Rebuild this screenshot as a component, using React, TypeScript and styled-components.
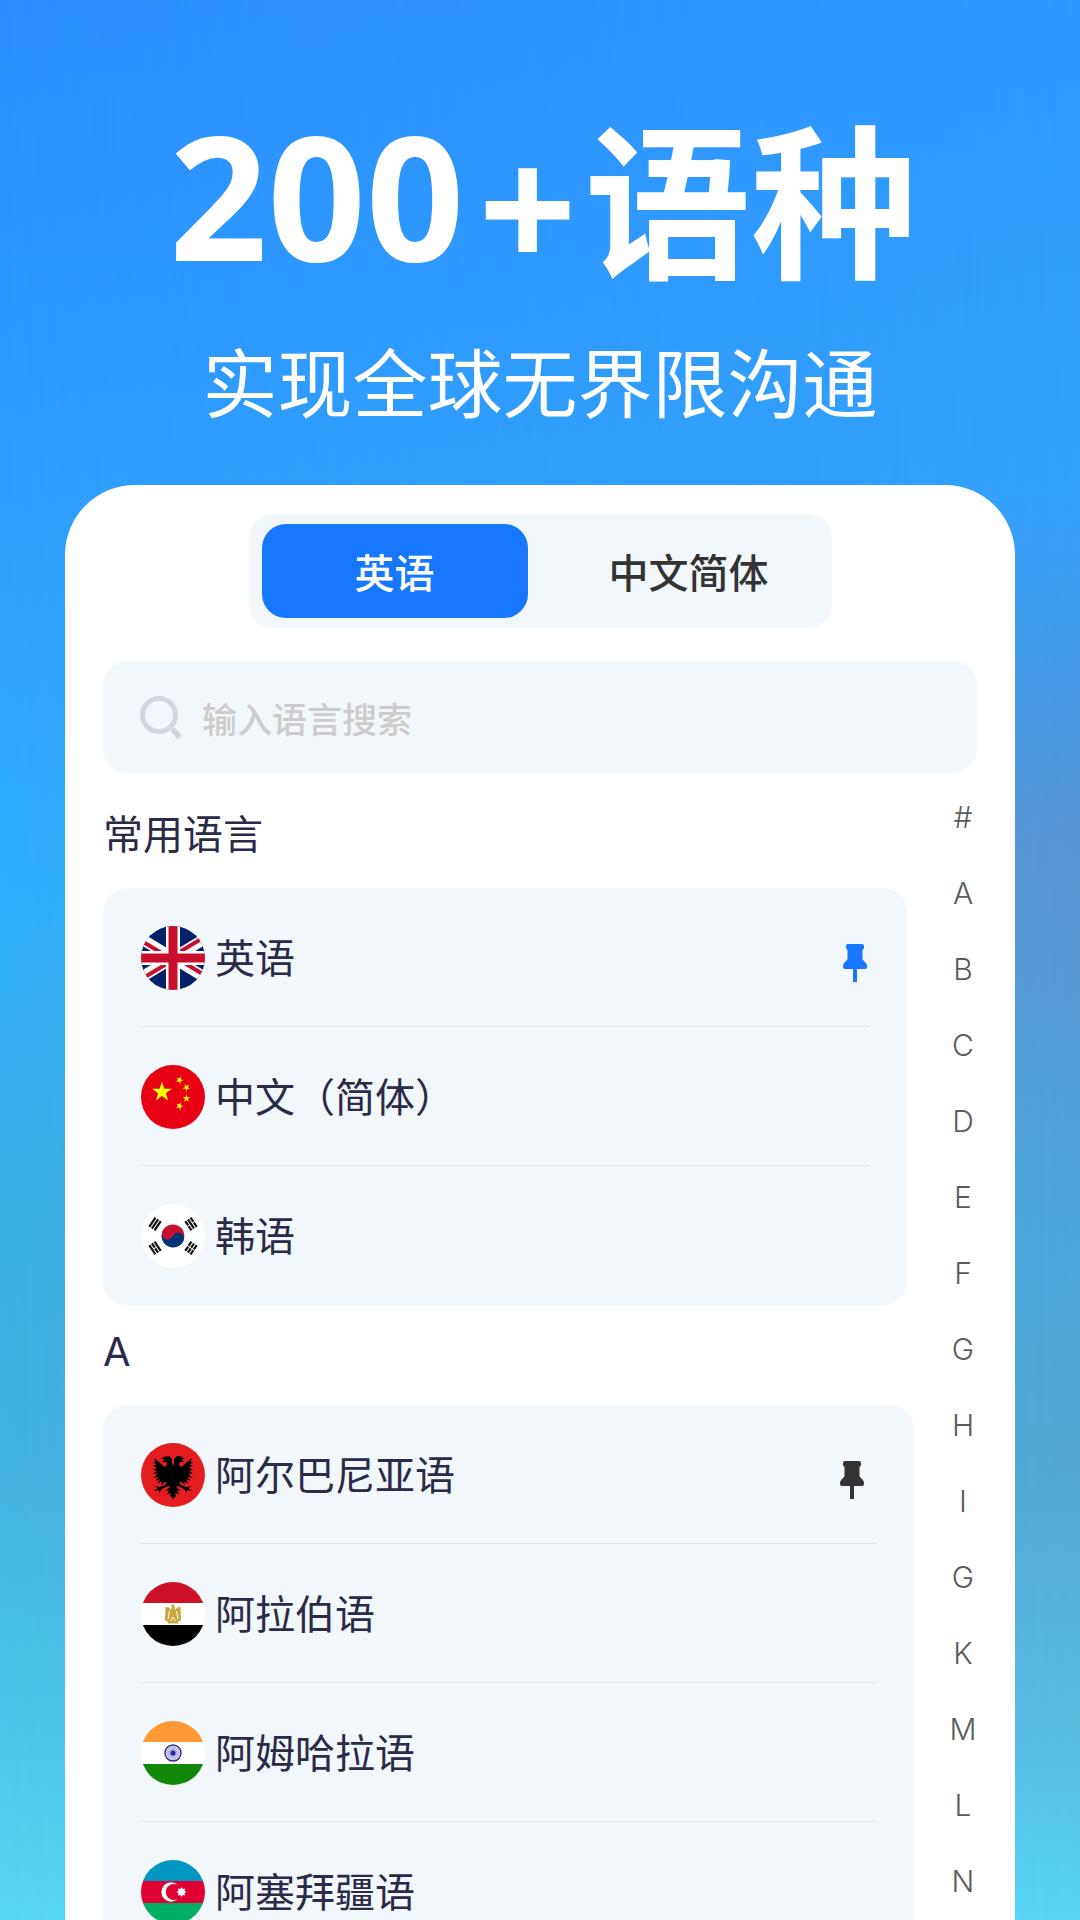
import React, { useState } from 'react';
import styled, { createGlobalStyle } from 'styled-components';

const GlobalStyle = createGlobalStyle`
  * {
    box-sizing: border-box;
  }

  body {
    margin: 0;
    font-family: 'Noto Sans CJK SC', 'Noto Sans', sans-serif;
  }

  button,
  input {
    font-family: inherit;
    border: none;
    padding: 0;
    background: none;
  }

  ul {
    list-style: none;
    margin: 0;
    padding: 0;
  }
`;

const Page = styled.div`
  position: relative;
  display: flex;
  flex-direction: column;
  height: 100vh;
  overflow: hidden;
  background: linear-gradient(
    180deg,
    #2b8dff 0%,
    #2e9fff 27%,
    #2eaefa 47%,
    #3db0e4 64%,
    #46b4e1 78%,
    #4cc6ec 90%,
    #55d7f3 100%
  );

  &::before {
    content: '';
    position: absolute;
    inset: 0;
    background: linear-gradient(
      180deg,
      #3098ff 0%,
      #33a0fb 25%,
      #4599e6 35%,
      #5894d3 44%,
      #5698d4 51%,
      #4aa4da 64%,
      #53a8d4 76%,
      #5abbdf 90%,
      #57d4f0 100%
    );
    mask-image: linear-gradient(90deg, transparent 0%, #000 100%);
  }
`;

const Hero = styled.header`
  position: relative;
  display: flex;
  flex-direction: column;
  align-items: center;
  flex: none;
  height: 485px;
  padding-top: 74px;
  color: #fff;
`;

const Title = styled.h1`
  display: flex;
  align-items: flex-start;
  margin: 0;
  padding-left: 6px;
  font-size: 166px;
  line-height: 240px;
  font-weight: 700;
`;

const Count = styled.span`
  font-family: 'Noto Sans', sans-serif;
  font-size: 172px;
`;

const Plus = styled(Count)`
  margin: 0 8px 0 14px;
  padding-top: 10px;
`;

const Subtitle = styled.p`
  margin: 0;
  font-size: 75px;
  line-height: 112px;
  font-weight: 400;
`;

const Panel = styled.main`
  position: relative;
  flex: 1;
  min-height: 0;
  display: flex;
  flex-direction: column;
  margin: 0 65px;
  padding: 29px 38px 0;
  overflow: hidden;
  background: #fff;
  border-radius: 70px 70px 0 0;
`;

const Tabs = styled.div`
  display: flex;
  flex: none;
  align-self: center;
  gap: 28px;
  padding: 10px 10px 10px 13px;
  border-radius: 24px;
  background: #f1f7fa;
`;

const Tab = styled.button<{ $active: boolean }>`
  width: 266px;
  height: 94px;
  border-radius: 24px;
  font-size: 40px;
  font-weight: 500;
  color: ${({ $active }) => ($active ? '#fff' : '#333')};
  background: ${({ $active }) => ($active ? '#1877ff' : 'transparent')};
`;

const SearchBox = styled.label`
  display: flex;
  align-items: center;
  flex: none;
  gap: 18px;
  height: 112px;
  margin-top: 33px;
  padding: 0 35px;
  border-radius: 24px;
  background: #f1f7fa;
`;

const SearchInput = styled.input`
  flex: 1;
  min-width: 0;
  font-size: 35px;
  font-weight: 500;
  color: #2b2a48;
  outline: none;

  &::placeholder {
    color: #ccc;
    opacity: 1;
  }
`;

const Body = styled.div`
  display: grid;
  grid-template-columns: 1fr 63px;
  padding-top: 6px;
`;

const Sections = styled.div`
  padding-top: 9px;
`;

const SectionTitle = styled.h2`
  margin: 0;
  padding: 17px 0 23px;
  font-family: Inter, 'Noto Sans CJK SC', sans-serif;
  font-size: 40px;
  line-height: 60px;
  font-weight: 400;
  color: #2b2a48;
`;

const LanguageList = styled.ul<{ $inset: number }>`
  margin-right: ${({ $inset }) => $inset}px;
  padding: 0 37px;
  border-radius: 24px;
  background: #f1f7fa;
`;

const LanguageRow = styled.li`
  display: flex;
  align-items: center;
  height: 139px;
  gap: 10px;
  padding-left: 1px;

  & + & {
    box-shadow: 0 -1px 0 #dfe4e8;
  }
`;

const LanguageName = styled.span`
  padding-bottom: 4px;
  font-size: 40px;
  color: #2b2a48;
`;

const PinButton = styled.button<{ $inset: number; $color: string }>`
  margin: 12px ${({ $inset }) => $inset}px 0 auto;
  color: ${({ $color }) => $color};

  svg {
    display: block;
  }
`;

const IndexBar = styled.nav`
  display: flex;
  flex-direction: column;
  padding-left: 35px;
`;

const IndexLink = styled.a`
  font-family: Inter, sans-serif;
  font-size: 30px;
  line-height: 76px;
  font-weight: 300;
  text-align: center;
  text-decoration: none;
  color: #5c5c5c;
`;

const star = (cx: number, cy: number, r: number, points = 5, inner = 0.382, turn = 0) =>
  Array.from({ length: points * 2 }, (_, i) => {
    const radius = i % 2 ? r * inner : r;
    const angle = (Math.PI * i) / points - Math.PI / 2 + turn;
    return `${(cx + radius * Math.cos(angle)).toFixed(2)},${(cy + radius * Math.sin(angle)).toFixed(2)}`;
  }).join(' ');

const Stripes: React.FC<{ colors: string[] }> = ({ colors }) => (
  <>
    <rect x="-32" y="-32" width="64" height="22" fill={colors[0]} />
    <rect x="-32" y="-11" width="64" height="22" fill={colors[1]} />
    <rect x="-32" y="11" width="64" height="22" fill={colors[2]} />
  </>
);

const eagleHalf =
  'M0.3-8L-1-12-1-16-4-19-8-18.500-12-16-8-15.500-11-13-7-13-6-10-8-8-11-10-14-13-19-17-17.500-13-20-13-17-10.500-20-9-16-7.500-20-5-16-4.500-20-1-15.500-1.500-19 3-14.500 1.500-17.500 6-13 4-15.500 8.500-11 6.500-12 10-8 7-6 7-8 10-13 12-19 11-15 13-19 16-14 15-14 18-11 14-7 12-5 11-3 12-8 16-4 15-6 19-2 18-3 21 0.300 24Z';

const flagArt: Record<string, React.ReactNode> = {
  gb: (
    <>
      <rect x="-32" y="-32" width="64" height="64" fill="#012169" />
      <path d="M-53-32L53 32M-53 32L53-32" stroke="#fff" strokeWidth="11" />
      <path d="M-53-30L0 2M53 30L0-2M0-2L53-34M0 2L-53 34" stroke="#c8102e" strokeWidth="4" />
      <path d="M0-32V32M-32 0H32" stroke="#fff" strokeWidth="14" />
      <path d="M0-32V32M-32 0H32" stroke="#c8102e" strokeWidth="9" />
    </>
  ),
  cn: (
    <>
      <rect x="-32" y="-32" width="64" height="64" fill="#e60012" />
      <g fill="#ffff00">
        <polygon points={star(-11, -5, 10.5)} />
        <polygon points={star(6.5, -17, 4, 5, 0.382, 0.4)} />
        <polygon points={star(13.5, -9.5, 4, 5, 0.382, 0.7)} />
        <polygon points={star(13.5, 1.5, 4)} />
        <polygon points={star(6.5, 9, 4, 5, 0.382, 0.4)} />
      </g>
    </>
  ),
  kr: (
    <>
      <rect x="-32" y="-32" width="64" height="64" fill="#fff" />
      <g transform="rotate(24)">
        <path d="M-11.500 0A11.500 11.500 0 0 1 11.500 0Z" fill="#c8102e" />
        <path d="M-11.500 0A11.500 11.500 0 0 0 11.500 0Z" fill="#003478" />
        <circle cx="-5.750" r="5.750" fill="#c8102e" />
        <circle cx="5.750" r="5.750" fill="#003478" />
      </g>
      <g stroke="#111" strokeWidth="2.200">
        <path d="M-5.500-3.200H5.500M-5.500 0H5.500M-5.500 3.200H5.500" transform="translate(-18 -12) rotate(-56)" />
        <path d="M-5.500-3.200H5.500M-5.500 0H-.4M.4 0H5.500M-5.500 3.200H5.500" transform="translate(-18 12) rotate(56)" />
        <path d="M-5.500-3.200H-.4M.4-3.200H5.500M-5.500 0H5.500M-5.500 3.200H-.4M.4 3.200H5.500" transform="translate(18 -12) rotate(56)" />
        <path d="M-5.500-3.200H-.4M.4-3.200H5.500M-5.500 0H-.4M.4 0H5.500M-5.500 3.200H-.4M.4 3.200H5.500" transform="translate(18 12) rotate(-56)" />
      </g>
    </>
  ),
  al: (
    <>
      <rect x="-32" y="-32" width="64" height="64" fill="#e41e20" />
      <path d={eagleHalf} />
      <path d={eagleHalf} transform="scale(-1 1)" />
    </>
  ),
  eg: (
    <>
      <Stripes colors={['#ce1126', '#fff', '#000']} />
      <g fill="#c9a73c">
        <path d="M-2-9.500L1-9.500 1.500-7 2.500-4 4-6.500 7.500-7 8 6 5 8H-5L-8 6-7.500-7-4-6.500-2.500-4-1-7Z" />
        <path d="M-5 7H5V9.500H-5Z" />
      </g>
      <path d="M-3.500-3L-5 5M3.500-3L5 5M-2.500 7L0 3L2.500 7" stroke="#fff" strokeWidth="1" fill="none" />
    </>
  ),
  in: (
    <>
      <Stripes colors={['#ff9933', '#fff', '#138808']} />
      <circle r="8" fill="#e4e4f6" stroke="#2a2a9c" strokeWidth="1.400" />
      <path
        d="M-7 0H7M0-7V7M-5-5L5 5M-5 5L5-5M-6.500-2.700L6.500 2.700M-6.500 2.700L6.500-2.700M-2.700-6.500L2.700 6.500M-2.700 6.500L2.700-6.500"
        stroke="#6a6abc"
        strokeWidth="0.600"
      />
      <circle r="2.500" fill="#2a2a9c" />
    </>
  ),
  az: (
    <>
      <Stripes colors={['#0098c3', '#e00034', '#00ae65']} />
      <circle cx="-2" r="9.700" fill="#fff" />
      <circle cx="0.800" r="8" fill="#e00034" />
      <polygon points={star(8.5, 0, 5, 8, 0.65)} fill="#fff" />
    </>
  ),
};

const Flag: React.FC<{ code: string }> = ({ code }) => (
  <svg width="64" height="64" viewBox="-32 -32 64 64" aria-hidden="true">
    <defs>
      <clipPath id={`flag-${code}`}>
        <circle r="32" />
      </clipPath>
    </defs>
    <g clipPath={`url(#flag-${code})`}>{flagArt[code]}</g>
  </svg>
);

const PinIcon = () => (
  <svg width="24" height="39" viewBox="0 0 24 39" fill="currentColor" aria-hidden="true">
    <path d="M5 0H19Q21 0 21 2V3.500Q21 5 19.500 6V15Q20 16.500 22 18Q24 20 24 22V23Q24 25 22 25H14V38H10V25H2Q0 25 0 23V22Q0 20 2 18Q4 16.500 4.500 15V6Q3 5 3 3.500V2Q3 0 5 0Z" />
  </svg>
);

const SearchIcon = () => (
  <svg width="46" height="46" viewBox="0 0 46 46" fill="none" stroke="#d3d5e2" aria-hidden="true">
    <circle cx="21" cy="21" r="16.500" strokeWidth="5" />
    <path d="M36 37L40 41.500" strokeWidth="6" strokeLinecap="round" />
  </svg>
);

const tabs = ['英语', '中文简体'];

const sections = [
  {
    title: '常用语言',
    inset: 7,
    pinInset: 3,
    pinColor: '#1877ff',
    languages: [
      { code: 'gb', name: '英语', pinned: true },
      { code: 'cn', name: '中文（简体）' },
      { code: 'kr', name: '韩语' },
    ],
  },
  {
    title: 'A',
    inset: 0,
    pinInset: 13,
    pinColor: '#333',
    languages: [
      { code: 'al', name: '阿尔巴尼亚语', pinned: true },
      { code: 'eg', name: '阿拉伯语' },
      { code: 'in', name: '阿姆哈拉语' },
      { code: 'az', name: '阿塞拜疆语' },
    ],
  },
];

const indexLetters = ['#', 'A', 'B', 'C', 'D', 'E', 'F', 'G', 'H', 'I', 'G', 'K', 'M', 'L', 'N'];

const App: React.FC = () => {
  const [activeTab, setActiveTab] = useState(0);

  return (
    <>
      <GlobalStyle />
      <Page>
        <Hero>
          <Title>
            <Count>200</Count>
            <Plus>+</Plus>
            <span>语种</span>
          </Title>
          <Subtitle>实现全球无界限沟通</Subtitle>
        </Hero>
        <Panel>
          <Tabs role="tablist">
            {tabs.map((tab, index) => (
              <Tab
                key={tab}
                type="button"
                role="tab"
                aria-selected={index === activeTab}
                $active={index === activeTab}
                onClick={() => setActiveTab(index)}
              >
                {tab}
              </Tab>
            ))}
          </Tabs>
          <SearchBox>
            <SearchIcon />
            <SearchInput type="text" placeholder="输入语言搜索" aria-label="输入语言搜索" />
          </SearchBox>
          <Body>
            <Sections>
              {sections.map(section => (
                <section key={section.title}>
                  <SectionTitle>{section.title}</SectionTitle>
                  <LanguageList $inset={section.inset}>
                    {section.languages.map(language => (
                      <LanguageRow key={language.code}>
                        <Flag code={language.code} />
                        <LanguageName>{language.name}</LanguageName>
                        {language.pinned && (
                          <PinButton
                            type="button"
                            aria-label="置顶"
                            $inset={section.pinInset}
                            $color={section.pinColor}
                          >
                            <PinIcon />
                          </PinButton>
                        )}
                      </LanguageRow>
                    ))}
                  </LanguageList>
                </section>
              ))}
            </Sections>
            <IndexBar>
              {indexLetters.map((letter, index) => (
                <IndexLink key={index} href={`#${letter}`}>
                  {letter}
                </IndexLink>
              ))}
            </IndexBar>
          </Body>
        </Panel>
      </Page>
    </>
  );
};

export default App;
